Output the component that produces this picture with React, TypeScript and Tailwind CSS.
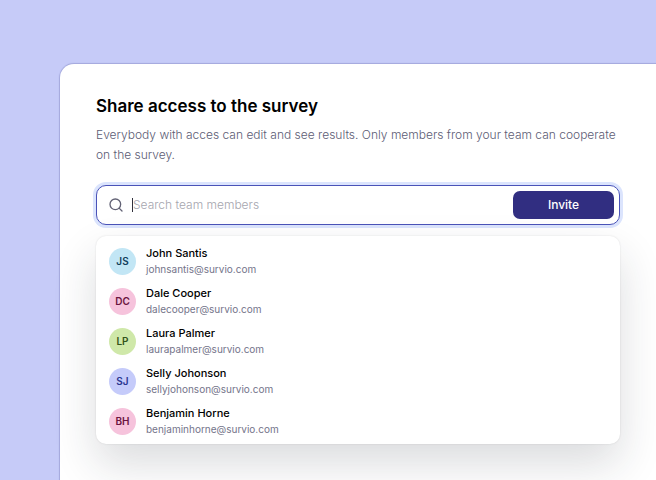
import React, { useState } from 'react';
import { Search } from 'lucide-react';

const members = [
    { initials: 'JS', name: 'John Santis', email: 'johnsantis@survio.com', color: 'bg-[#c2e6f5] text-[#123f5c]' },
    { initials: 'DC', name: 'Dale Cooper', email: 'dalecooper@survio.com', color: 'bg-[#f6c3dc] text-[#6b1440]' },
    { initials: 'LP', name: 'Laura Palmer', email: 'laurapalmer@survio.com', color: 'bg-[#cfe8a9] text-[#33541a]' },
    { initials: 'SJ', name: 'Selly Johonson', email: 'sellyjohonson@survio.com', color: 'bg-[#c5cbfa] text-[#2b3590]' },
    { initials: 'BH', name: 'Benjamin Horne', email: 'benjaminhorne@survio.com', color: 'bg-[#f6c3dc] text-[#6b1440]' },
];

const SearchBar = () => {
    const [query, setQuery] = useState('');

    return (
        <form
            onSubmit={(e) => e.preventDefault()}
            className="mt-5 flex h-10 items-center rounded-[10px] border border-[#4a53b8] bg-white pl-[11px] pr-[5px] ring-3 ring-[#dbe4fd]"
        >
            <Search size={16} strokeWidth={2} className="shrink-0 text-[#626275]" aria-hidden="true" />
            {/* Text caret */}
            {!query && <span className="ml-2 -mr-px h-3.5 w-px shrink-0 bg-[#30303c]" />}
            <input
                type="text"
                aria-label="Search team members"
                placeholder="Search team members"
                value={query}
                onChange={(e) => setQuery(e.target.value)}
                className="min-w-0 flex-1 pl-px text-xs font-light text-[#30303c] outline-none placeholder:text-[#a5a5ae]"
            />
            <button type="submit" className="h-7 w-[101px] shrink-0 rounded-[7px] bg-[#312e81] text-xs font-medium text-white">
                Invite
            </button>
        </form>
    );
};

export default function App() {
    return (
        <div className="flex min-h-screen flex-col overflow-hidden bg-[#c6cbf8] pl-15 pt-16 font-['Inter',sans-serif]">
            <main className="flex-1 rounded-tl-[14px] bg-white px-9 pb-9 pt-[30px] shadow-[0_0_1px_1px_#a3a8dc]">
                <h1 className="text-[17px] leading-6 font-semibold text-black">Share access to the survey</h1>
                <p className="mt-[7px] text-xs leading-5 font-light text-[#5c5c74]">
                    Everybody with acces can edit and see results. Only members from your team can cooperate on the survey.
                </p>

                <SearchBar />

                <ul className="mt-[11px] rounded-[10px] bg-white pt-[5px] pb-[3px] shadow-[0_0_2px_rgba(0,0,0,0.12),0_20px_44px_rgba(30,40,50,0.16)]">
                    {members.map((member) => (
                        <li key={member.email} className="flex h-10 items-center gap-[10px] pl-[13px]">
                            <span className={`flex size-[27px] items-center justify-center rounded-full text-[10px] font-semibold ${member.color}`}>
                                {member.initials}
                            </span>
                            <div>
                                <p className="text-[11px] leading-4 font-medium text-black">{member.name}</p>
                                <p className="text-[10px] leading-4 text-[#74748a]">{member.email}</p>
                            </div>
                        </li>
                    ))}
                </ul>
            </main>
        </div>
    );
}
